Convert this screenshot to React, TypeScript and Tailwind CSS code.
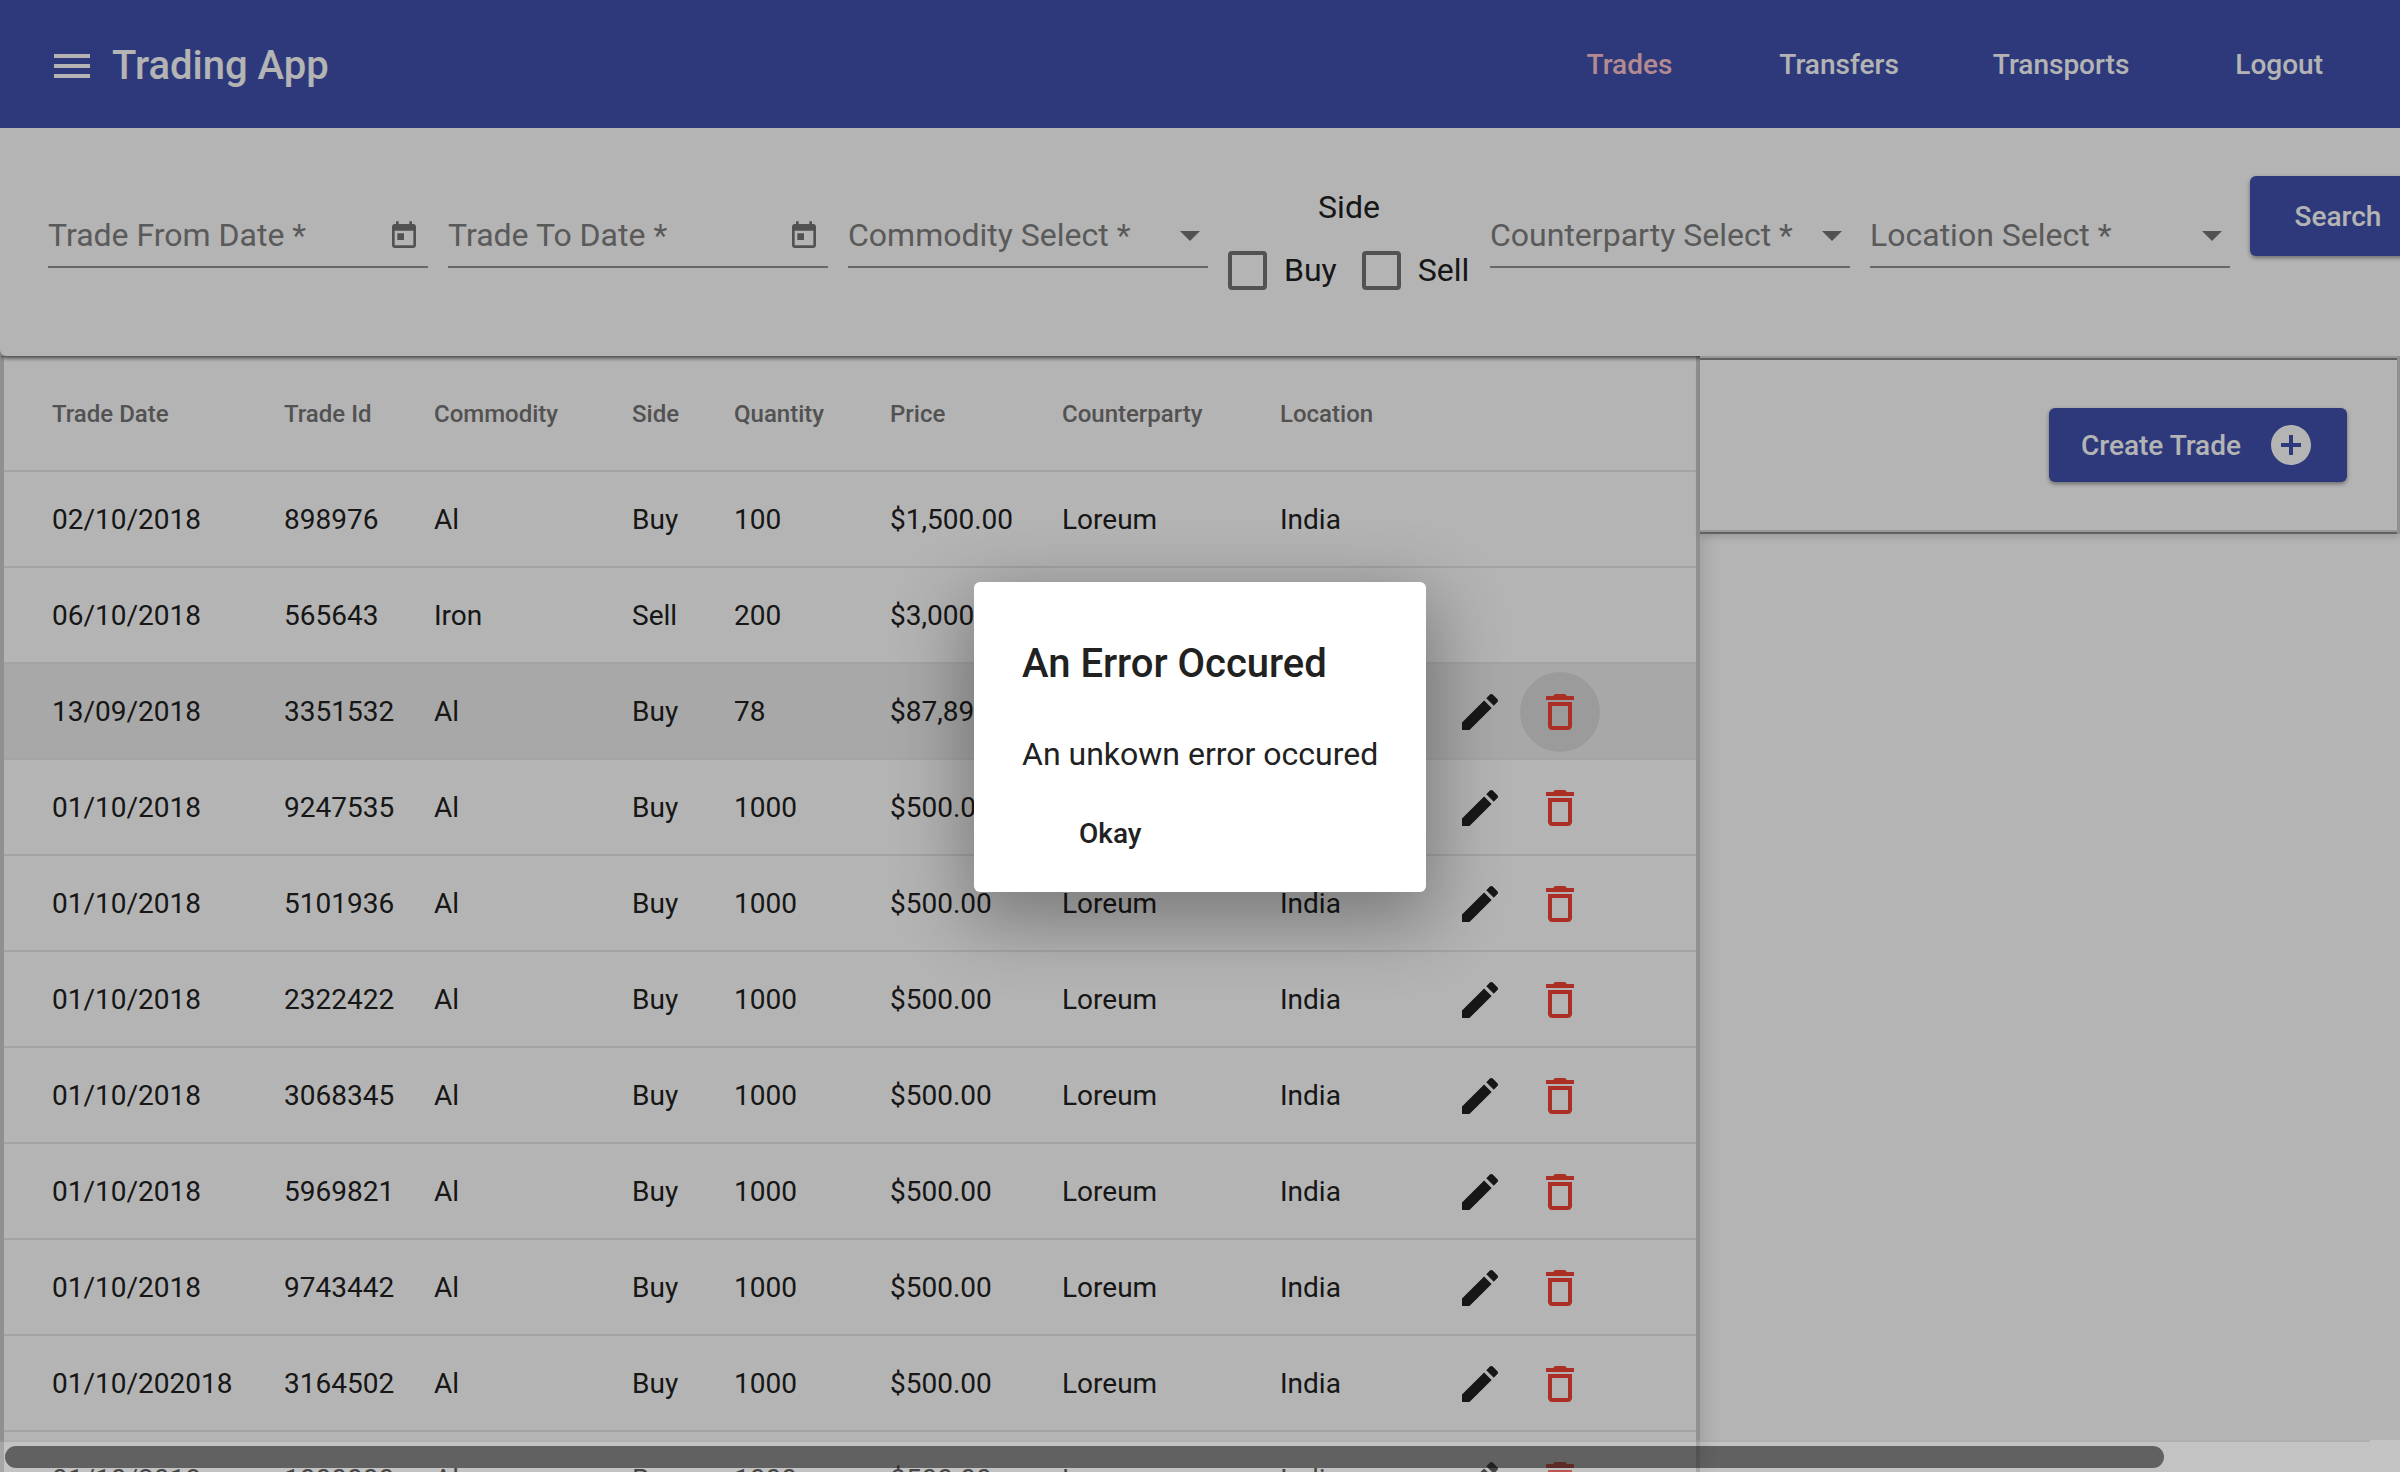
const rows = [
  { date: '02/10/2018', id: '898976', item: 'Al', side: 'Buy', qty: '100', price: '$1,500.00', actions: false },
  { date: '06/10/2018', id: '565643', item: 'Iron', side: 'Sell', qty: '200', price: '$3,000.00', actions: false },
  { date: '13/09/2018', id: '3351532', item: 'Al', side: 'Buy', qty: '78', price: '$87,890.00', actions: true, hover: true },
  { date: '01/10/2018', id: '9247535', item: 'Al', side: 'Buy', qty: '1000', price: '$500.00', actions: true },
  { date: '01/10/2018', id: '5101936', item: 'Al', side: 'Buy', qty: '1000', price: '$500.00', actions: true },
  { date: '01/10/2018', id: '2322422', item: 'Al', side: 'Buy', qty: '1000', price: '$500.00', actions: true },
  { date: '01/10/2018', id: '3068345', item: 'Al', side: 'Buy', qty: '1000', price: '$500.00', actions: true },
  { date: '01/10/2018', id: '5969821', item: 'Al', side: 'Buy', qty: '1000', price: '$500.00', actions: true },
  { date: '01/10/2018', id: '9743442', item: 'Al', side: 'Buy', qty: '1000', price: '$500.00', actions: true },
  { date: '01/10/202018', id: '3164502', item: 'Al', side: 'Buy', qty: '1000', price: '$500.00', actions: true },
  { date: '01/10/2018', id: '1000000', item: 'Al', side: 'Buy', qty: '1000', price: '$500.00', actions: true },
];

const columns = ['Trade Date', 'Trade Id', 'Commodity', 'Side', 'Quantity', 'Price', 'Counterparty', 'Location'];
const gridCols = 'grid grid-cols-[232px_150px_198px_102px_156px_172px_218px_160px_80px_80px_1fr] pl-[48px]';

function Icon({ d, className }: { d: string; className: string }) {
  return (
    <svg viewBox="0 0 24 24" fill="currentColor" className={className}>
      <path d={d} />
    </svg>
  );
}

const MENU = 'M3 18h18v-2H3v2zm0-5h18v-2H3v2zm0-7v2h18V6H3z';
const CALENDAR = 'M19 3h-1V1h-2v2H8V1H6v2H5c-1.11 0-1.99.9-1.99 2L3 19c0 1.1.89 2 2 2h14c1.1 0 2-.9 2-2V5c0-1.1-.9-2-2-2zm0 16H5V8h14v11zM7 10h5v5H7z';
const ARROW = 'M7 10l5 5 5-5z';
const EDIT = 'M3 17.25V21h3.75L17.81 9.94l-3.75-3.75L3 17.25zM20.71 7.04c.39-.39.39-1.02 0-1.41l-2.34-2.34c-.39-.39-1.02-.39-1.41 0l-1.83 1.83 3.75 3.75 1.83-1.83z';
const TRASH = 'M6 19c0 1.1.9 2 2 2h8c1.1 0 2-.9 2-2V7H6v12zM8 9h8v10H8V9zm7.5-5l-1-1h-5l-1 1H5v2h14V4h-3.5z';
const ADD = 'M12 2C6.48 2 2 6.48 2 12s4.48 10 10 10 10-4.48 10-10S17.52 2 12 2zm5 11h-4v4h-2v-4H7v-2h4V7h2v4h4v2z';

function Field({ label, width, icon }: { label: string; width: string; icon: 'date' | 'select' }) {
  return (
    <div className={`${width} h-[92px] flex items-end justify-between border-b-2 border-[#949494] pb-[7px] shrink-0`}>
      <span className="text-[32px] leading-[48px] text-[#808080]">{label}</span>
      {icon === 'date' ? (
        <Icon d={CALENDAR} className="w-8 h-8 mb-[7px] mr-2 text-[#757575]" />
      ) : (
        <Icon d={ARROW} className="w-12 h-12 mr-[-6px] text-[#757575]" />
      )}
    </div>
  );
}

function Check({ label }: { label: string }) {
  return (
    <div className="flex items-center gap-[17px]">
      <div className="w-[39px] h-[39px] border-[4px] border-[#757575] rounded-[4px]" />
      <span className="text-[32px] leading-[40px] text-[#212121]">{label}</span>
    </div>
  );
}

export default function App() {
  return (
    <div className="relative h-[1472px] overflow-hidden bg-white font-['Roboto',sans-serif]">
      <header className="h-32 pt-1 bg-[#4052ae] flex items-center pl-12 pr-[77px] text-white relative z-20">
        <Icon d={MENU} className="w-12 h-12" />
        <span className="ml-4 text-[40px] font-medium leading-none -mt-px">Trading App</span>
        <nav className="ml-auto flex items-center -mt-[2px] text-[28px] font-medium">
          <span className="text-[#fdc4cb]">Trades</span>
          <span className="ml-[107px]">Transfers</span>
          <span className="ml-[94px]">Transports</span>
          <span className="ml-[106px]">Logout</span>
        </nav>
      </header>

      <section className="relative z-10 h-[228px] pl-12 pt-12 flex gap-5 rounded-bl-md shadow-[0_2px_4px_rgba(0,0,0,0.65)] bg-white">
        <Field label="Trade From Date *" width="w-[380px]" icon="date" />
        <Field label="Trade To Date *" width="w-[380px]" icon="date" />
        <Field label="Commodity Select *" width="w-[360px]" icon="select" />
        <div className="w-[242px] shrink-0 flex flex-col items-center mt-[7px]">
          <span className="text-[32px] leading-[48px] text-[#212121]">Side</span>
          <div className="flex gap-[25px] mt-[19px] self-start">
            <Check label="Buy" />
            <Check label="Sell" />
          </div>
        </div>
        <Field label="Counterparty Select *" width="w-[360px]" icon="select" />
        <Field label="Location Select *" width="w-[360px]" icon="select" />
        <button className="w-[176px] h-20 shrink-0 pt-[2px] bg-[#4052ae] text-white text-[28px] font-medium rounded-md shadow-[0_2px_4px_rgba(0,0,0,0.4)]">
          Search
        </button>
      </section>

      <main className="flex items-start">
        <div className="w-[1700px] h-[1116px] shrink-0 border-x-4 border-[#cdcdcd] shadow-[6px_0_16px_rgba(0,0,0,0.1)] overflow-hidden relative z-[1]">
          <div className={`${gridCols} h-[116px] pt-[2px] items-center border-b-2 border-[#e8e8e8] text-[24px] font-medium text-[#757575]`}>
            {columns.map(c => (
              <span key={c}>{c}</span>
            ))}
          </div>
          {rows.map(r => (
            <div
              key={r.id}
              className={`${gridCols} h-24 pt-[2px] items-center border-b-2 border-[#e8e8e8] text-[28px] text-[#212121] ${r.hover ? 'bg-[#eeeeee]' : ''}`}
            >
              <span>{r.date}</span>
              <span>{r.id}</span>
              <span>{r.item}</span>
              <span>{r.side}</span>
              <span>{r.qty}</span>
              <span>{r.price}</span>
              <span>Loreum</span>
              <span>India</span>
              {r.actions ? (
                <>
                  <div className="w-20 h-20 flex items-center justify-center">
                    <Icon d={EDIT} className="w-12 h-12" />
                  </div>
                  <div className={`w-20 h-20 flex items-center justify-center rounded-full ${r.hover ? 'bg-[#dcdcdc]' : ''}`}>
                    <Icon d={TRASH} className="w-12 h-12 text-[#f44336]" />
                  </div>
                </>
              ) : null}
            </div>
          ))}
        </div>
        <div className="relative z-[11] w-[700px] h-[178px] bg-white flex justify-end items-start pt-[52px] pr-[50px] border-r-[3px] border-[#cdcdcd] shadow-[inset_0_2px_0_#dcd6d6,inset_0_4px_0_#8a8a8a,inset_0_-2px_0_#8a8a8a,inset_0_-4px_0_#dcd6d6,0_4px_6px_rgba(0,0,0,0.12)]">
          <button className="h-[74px] flex items-center gap-[26px] pl-[32px] pr-[32px] bg-[#4052ae] text-white text-[28px] font-medium rounded-md shadow-[0_2px_4px_rgba(0,0,0,0.4)]">
            <span className="pt-[2px]">Create Trade</span>
            <Icon d={ADD} className="w-12 h-12" />
          </button>
        </div>
      </main>

      <div className="absolute inset-0 z-30 bg-black/[0.295] flex items-center justify-center">
        <div className="w-[452px] mt-[2px] bg-white rounded-md pt-[50px] pb-[38px] px-12 text-[#212121] shadow-[0_22px_72px_8px_rgba(0,0,0,0.32)]">
          <h2 className="text-[40px] leading-[64px] font-medium whitespace-nowrap">An Error Occured</h2>
          <p className="mt-[34px] text-[32px] leading-[48px] whitespace-nowrap">An unkown error occured</p>
          <button className="block mt-[36px] ml-[57px] text-[28px] leading-[40px] font-medium">Okay</button>
        </div>
      </div>

      <div className="absolute left-0 right-0 bottom-0 h-8 z-40 bg-white/20">
        <div className="h-[2px] w-[2370px] bg-black/10" />
        <div className="absolute left-[5px] top-[6px] h-[22px] w-[2159px] rounded-full bg-black/50" />
      </div>
    </div>
  );
}
